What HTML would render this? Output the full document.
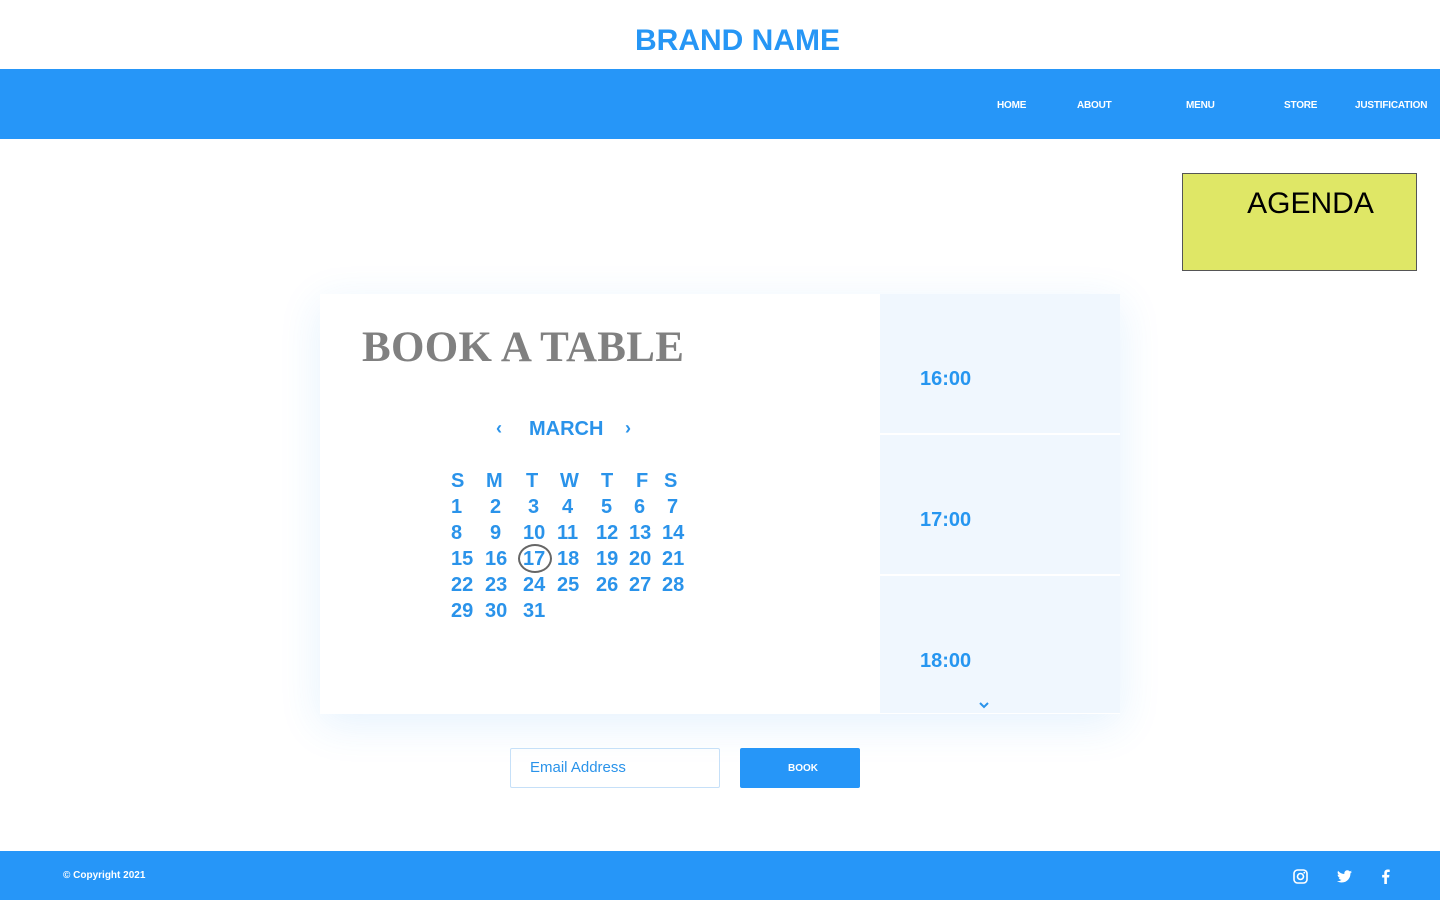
<!DOCTYPE html>
<html><head><style>
*{margin:0;padding:0;box-sizing:border-box}
body{width:1440px;height:900px;position:relative;background:#fff;font-family:"Liberation Sans",Arial,sans-serif;overflow:hidden}
.a{position:absolute}
.brand{left:0;width:1475px;top:24px;text-align:center;color:#2696f5;font-weight:bold;font-size:30px}
.nav{left:0;top:69px;width:1440px;height:70px;background:#2696f8}
.nav span{position:absolute;top:31px;color:#fff;font-size:10px;font-weight:bold;letter-spacing:-0.2px}
.agenda{left:1182px;top:173px;width:235px;height:98px;background:#dfe766;border:1px solid #555;font-size:30px;text-align:center;padding-top:13px;padding-left:22px;color:#000}
.card{left:320px;top:294px;width:800px;height:420px;background:#fff;box-shadow:0 10px 40px rgba(38,150,248,.12)}
.title{left:362px;top:323px;font-family:"Liberation Serif",serif;font-weight:bold;font-size:43px;color:#808080;letter-spacing:0.3px}
.side{left:880px;width:240px;height:140px;background:#f0f7fe;border-bottom:1px solid #fff}
.time{left:920px;color:#2696f0;font-weight:bold;font-size:20px}
.bl{color:#2a93ea;font-weight:bold;font-size:20px}
.d{position:absolute;color:#2a93ea;font-weight:bold;font-size:20px;line-height:20px}
.email{left:510px;top:748px;width:210px;height:40px;border:1px solid #c6e0f8;border-radius:2px;color:#2a93ea;font-size:15px;padding:10px 0 0 19px}
.book{left:740px;top:748px;width:120px;height:40px;background:#2696f8;border-radius:2px;color:#fff;font-size:10px;font-weight:bold;text-align:center;line-height:42px;padding-left:6px}
.foot{left:0;top:851px;width:1440px;height:49px;background:#2696f8}
</style></head><body>
<div class="a brand">BRAND NAME</div>
<div class="a nav">
<span style="left:997px">HOME</span><span style="left:1077px">ABOUT</span><span style="left:1186px">MENU</span><span style="left:1284px">STORE</span><span style="left:1355px">JUSTIFICATION</span>
</div>
<div class="a agenda">AGENDA</div>
<div class="a card"></div>
<div class="a side" style="top:294px"></div>
<div class="a side" style="top:435px"></div>
<div class="a side" style="top:576px;height:138px"></div>
<div class="a time" style="top:368px">16:00</div>
<div class="a time" style="top:509px">17:00</div>
<div class="a time" style="top:650px">18:00</div>
<svg class="a" style="left:978px;top:700px" width="12" height="10" viewBox="0 0 12 10"><path d="M2 3l4 4 4-4" stroke="#2a93ea" stroke-width="2" fill="none"/></svg>
<div class="a title">BOOK A TABLE</div>
<div class="a bl" style="left:496px;top:418px;font-size:18px">‹</div>
<div class="a bl" style="left:529px;top:418px">MARCH</div>
<div class="a bl" style="left:625px;top:418px;font-size:18px">›</div>
<div class="a" style="left:0;top:1px">
<div class="d" style="left:451px;top:470px">S</div><div class="d" style="left:486px;top:470px">M</div><div class="d" style="left:526px;top:470px">T</div><div class="d" style="left:560px;top:470px">W</div><div class="d" style="left:601px;top:470px">T</div><div class="d" style="left:636px;top:470px">F</div><div class="d" style="left:664px;top:470px">S</div>
<div class="d" style="left:451px;top:496px">1</div><div class="d" style="left:490px;top:496px">2</div><div class="d" style="left:528px;top:496px">3</div><div class="d" style="left:562px;top:496px">4</div><div class="d" style="left:601px;top:496px">5</div><div class="d" style="left:634px;top:496px">6</div><div class="d" style="left:667px;top:496px">7</div>
<div class="d" style="left:451px;top:522px">8</div><div class="d" style="left:490px;top:522px">9</div><div class="d" style="left:523px;top:522px">10</div><div class="d" style="left:557px;top:522px">11</div><div class="d" style="left:596px;top:522px">12</div><div class="d" style="left:629px;top:522px">13</div><div class="d" style="left:662px;top:522px">14</div>
<div class="d" style="left:451px;top:548px">15</div><div class="d" style="left:485px;top:548px">16</div><div class="d" style="left:523px;top:548px">17</div><div class="d" style="left:557px;top:548px">18</div><div class="d" style="left:596px;top:548px">19</div><div class="d" style="left:629px;top:548px">20</div><div class="d" style="left:662px;top:548px">21</div>
<div class="d" style="left:451px;top:574px">22</div><div class="d" style="left:485px;top:574px">23</div><div class="d" style="left:523px;top:574px">24</div><div class="d" style="left:557px;top:574px">25</div><div class="d" style="left:596px;top:574px">26</div><div class="d" style="left:629px;top:574px">27</div><div class="d" style="left:662px;top:574px">28</div>
<div class="d" style="left:451px;top:600px">29</div><div class="d" style="left:485px;top:600px">30</div><div class="d" style="left:523px;top:600px">31</div>
</div>
<div class="a" style="left:518px;top:544px;width:34px;height:29px;border:2px solid #666;border-radius:50%"></div>
<div class="a email">Email Address</div>
<div class="a book">BOOK</div>
<div class="a foot">
<span class="a" style="left:63px;top:19px;color:#fff;font-size:10px;font-weight:bold">© Copyright 2021</span>
<svg class="a" style="left:1293px;top:18px" width="15" height="15" viewBox="0 0 15 15"><rect x="1" y="1" width="13" height="13" rx="3.5" stroke="#fff" stroke-width="1.6" fill="none"/><circle cx="7.5" cy="7.5" r="3" stroke="#fff" stroke-width="1.6" fill="none"/><circle cx="11.3" cy="3.7" r=".9" fill="#fff"/></svg>
<svg class="a" style="left:1337px;top:19px" width="15" height="13" viewBox="0 0 24 20"><path fill="#fff" d="M24 2.4c-.9.4-1.8.7-2.8.8 1-.6 1.8-1.6 2.2-2.7-1 .6-2 1-3.1 1.2C19.3.7 18 0 16.6 0c-2.7 0-4.9 2.2-4.9 4.9 0 .4 0 .8.1 1.1C7.700 5.8 4.1 3.9 1.7.9c-.4.7-.7 1.6-.7 2.5 0 1.7.9 3.2 2.2 4.1-.8 0-1.6-.2-2.2-.6v.1c0 2.4 1.7 4.4 3.900 4.8-.4.1-.8.2-1.3.2-.3 0-.6 0-.9-.1.6 2 2.4 3.4 4.6 3.4-1.7 1.3-3.8 2.1-6.1 2.1-.4 0-.8 0-1.200-.1 2.2 1.4 4.8 2.2 7.5 2.2 9.1 0 14-7.5 14-14v-.6c1-.7 1.8-1.600 2.5-2.5z"/></svg>
<svg class="a" style="left:1381px;top:18px" width="9" height="15" viewBox="0 0 9 16"><path fill="#fff" d="M6 16V9h2.3l.4-2.8H6V4.5c0-.8.2-1.3 1.4-1.3H9V.7C8.7.6 7.8.5 6.8.5 4.7.5 3.2 1.8 3.2 4.2v2H.9V9h2.3v7z"/></svg>
</div>
</body></html>
